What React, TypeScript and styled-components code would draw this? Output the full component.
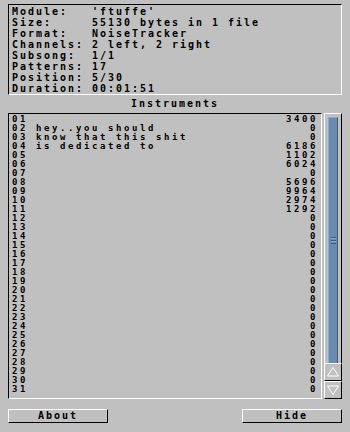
import styled, { createGlobalStyle } from 'styled-components';

const GlobalStyle = createGlobalStyle`
  html, body {
    margin: 0;
    padding: 0;
    background: #c0c0c0;
  }
`;

const Window = styled.div`
  width: 350px;
  height: 432px;
  box-sizing: border-box;
  padding: 4px 8px 0 8px;
  background: #c0c0c0;
  color: #000;
  font-family: "DejaVu Sans Mono", "Liberation Mono", monospace;
  font-weight: bold;
  font-size: 10px;
  letter-spacing: 1.98px;
  display: flex;
  flex-direction: column;
`;

const Recessed = styled.div`
  box-sizing: border-box;
  border-top: 1px solid #000;
  border-left: 1px solid #000;
  border-right: 1px solid #fff;
  border-bottom: 1px solid #fff;
`;

const InfoBox = styled(Recessed)`
  height: 91px;
  padding: 1px 0 0 3px;
`;

const InfoRow = styled.div`
  display: grid;
  grid-template-columns: 80px 1fr;
  height: 11px;
  line-height: 11px;
  white-space: pre;
`;

const SectionTitle = styled.div`
  text-align: center;
  height: 18px;
  line-height: 18px;
`;

const ListArea = styled.div`
  display: flex;
  gap: 2px;
  height: 286px;
`;

const ListBox = styled(Recessed)`
  width: 314px;
  padding: 1px 5px 0 3px;
  overflow: hidden;
  font-size: 9px;
  letter-spacing: 2.58px;
`;

const InstrRow = styled.div`
  display: flex;
  height: 9px;
  line-height: 9px;
  white-space: pre;
`;

const InstrNum = styled.span`
  width: 24px;
`;

const InstrName = styled.span`
  flex: 1;
`;

const InstrSize = styled.span`
  text-align: right;
  margin-right: -2px;
`;

const Scroller = styled.div`
  width: 18px;
  display: flex;
  flex-direction: column;
`;

const Track = styled.div`
  flex: 1;
  box-sizing: border-box;
  border-top: 1px solid #fff;
  border-left: 1px solid #fff;
  border-right: 1px solid #000;
  padding: 3px 3px 0 3px;
`;

const Knob = styled.div`
  height: 100%;
  box-sizing: border-box;
  background: #6a8bb0;
  border-left: 1px solid #8eaacb;
  border-top: 1px solid #8eaacb;
  border-right: 1px solid #3d5a7c;
  display: flex;
  align-items: center;
  justify-content: center;
`;

const Grip = styled.div`
  width: 5px;
  height: 7px;
  background: repeating-linear-gradient(
    to bottom,
    #3d5a7c 0px,
    #3d5a7c 1px,
    #8eaacb 1px,
    #8eaacb 2px,
    transparent 2px,
    transparent 3px
  );
`;

const ArrowButton = styled.div`
  height: 18px;
  box-sizing: border-box;
  border-top: 1px solid #fff;
  border-left: 1px solid #fff;
  border-right: 1px solid #000;
  border-bottom: 1px solid #000;
  display: flex;
  align-items: center;
  justify-content: center;
`;

const ButtonRow = styled.div`
  display: flex;
  justify-content: space-between;
  margin-top: 10px;
`;

const Button = styled.div`
  width: 100px;
  height: 14px;
  box-sizing: border-box;
  border-top: 1px solid #fff;
  border-left: 1px solid #fff;
  border-right: 1px solid #000;
  border-bottom: 1px solid #000;
  text-align: center;
  line-height: 12px;
`;

const info: [string, string][] = [
  ['Module:', "'ftuffe'"],
  ['Size:', '55130 bytes in 1 file'],
  ['Format:', 'NoiseTracker'],
  ['Channels:', '2 left, 2 right'],
  ['Subsong:', '1/1'],
  ['Patterns:', '17'],
  ['Position:', '5/30'],
  ['Duration:', '00:01:51'],
];

const names: Record<number, string> = {
  2: 'hey..you should',
  3: 'know that this shit',
  4: 'is dedicated to',
};

const sizes: Record<number, number> = {
  1: 3400,
  4: 6186,
  5: 1102,
  6: 6024,
  8: 5696,
  9: 9964,
  10: 2974,
  11: 1292,
};

const instruments = Array.from({ length: 31 }, (_, i) => ({
  num: String(i + 1).padStart(2, '0'),
  name: names[i + 1] ?? '',
  size: sizes[i + 1] ?? 0,
}));

function App() {
  return (
    <>
      <GlobalStyle />
      <Window>
        <InfoBox>
          {info.map(([label, value]) => (
            <InfoRow key={label}>
              <span>{label}</span>
              <span>{value}</span>
            </InfoRow>
          ))}
        </InfoBox>
        <SectionTitle>Instruments</SectionTitle>
        <ListArea>
          <ListBox>
            {instruments.map((ins) => (
              <InstrRow key={ins.num}>
                <InstrNum>{ins.num}</InstrNum>
                <InstrName>{ins.name}</InstrName>
                <InstrSize>{ins.size}</InstrSize>
              </InstrRow>
            ))}
          </ListBox>
          <Scroller>
            <Track>
              <Knob>
                <Grip />
              </Knob>
            </Track>
            <ArrowButton>
              <svg width="12" height="10" viewBox="0 0 12 10">
                <path d="M6 0.5 L11.5 9 L0.5 9 Z" fill="none" stroke="#fff" strokeWidth="1" />
              </svg>
            </ArrowButton>
            <ArrowButton>
              <svg width="12" height="10" viewBox="0 0 12 10">
                <path d="M0.5 1 L11.5 1 L6 9.5 Z" fill="none" stroke="#fff" strokeWidth="1" />
              </svg>
            </ArrowButton>
          </Scroller>
        </ListArea>
        <ButtonRow>
          <Button>About</Button>
          <Button>Hide</Button>
        </ButtonRow>
      </Window>
    </>
  );
}

export default App;
